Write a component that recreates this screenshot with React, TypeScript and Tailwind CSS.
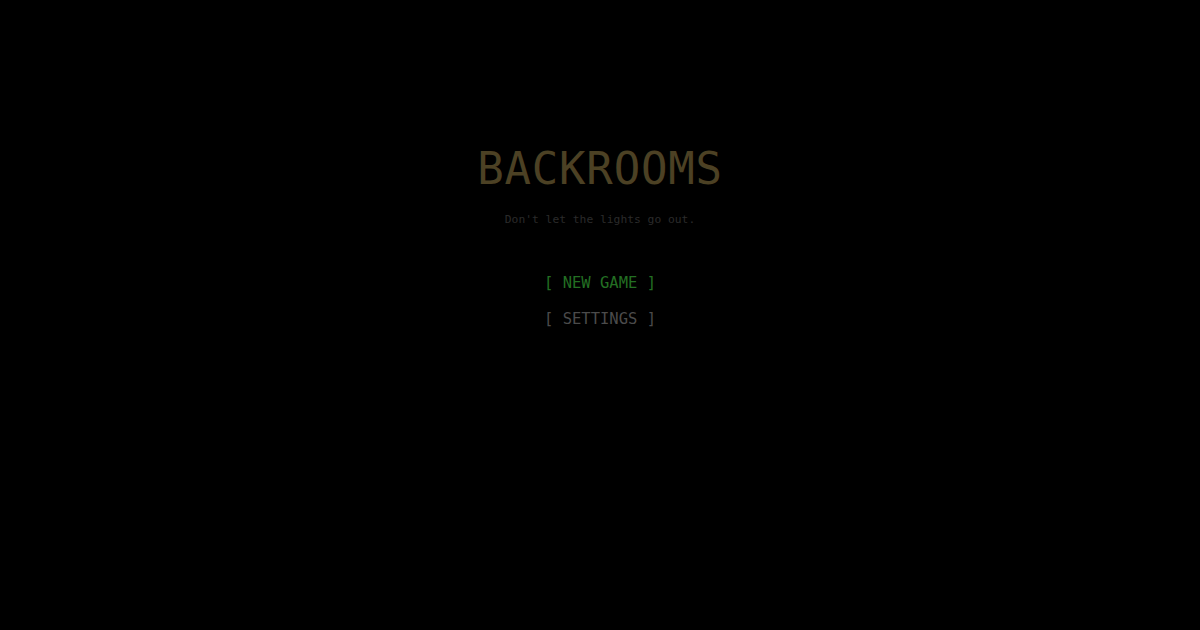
import React from 'react';

export default function App() {
  return (
    <div className="min-h-screen w-full bg-black flex flex-col items-center pt-[147px] font-['DejaVu_Sans_Mono',monospace]">
      <h1 className="text-[44px] leading-none text-[#4c4124] tracking-[0.8px]">BACKROOMS</h1>
      <p className="mt-[23px] text-[11.3px] leading-none text-[#2b2b2b]">Don't let the lights go out.</p>
      <div className="mt-[51px] flex flex-col items-center gap-[20.5px]">
        <button type="button" className="text-[15.5px] leading-none text-[#236f23]">
          [ NEW GAME ]
        </button>
        <button type="button" className="text-[15.5px] leading-none text-[#4b4b4b]">
          [ SETTINGS ]
        </button>
      </div>
    </div>
  );
}
